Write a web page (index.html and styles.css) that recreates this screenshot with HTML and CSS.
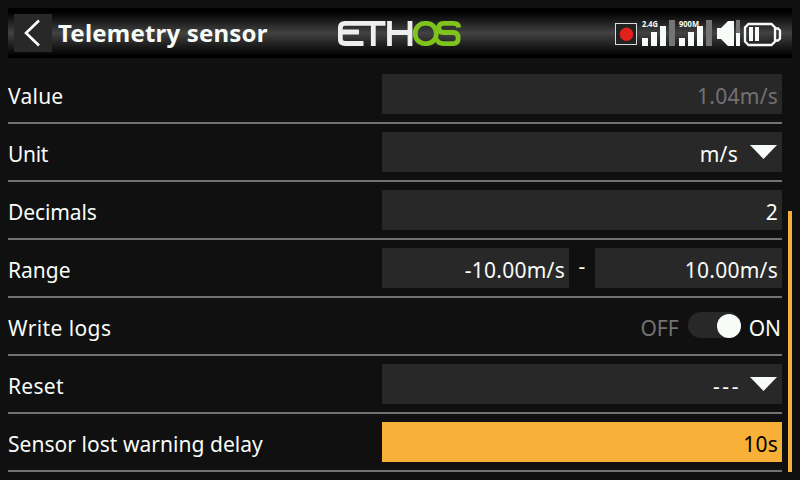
FILE: index.html
```
<!DOCTYPE html>
<html lang="en">
<head>
<meta charset="utf-8">
<title>Telemetry sensor</title>
<link rel="stylesheet" href="styles.css">
</head>
<body>
<header class="topbar">
  <button class="back" aria-label="Back"><svg width="38" height="38" viewBox="0 0 38 38"><path d="M25 6.500L12 19L25 31.500" fill="none" stroke="#fff" stroke-width="2.600"/></svg></button>
  <h1 class="title">Telemetry sensor</h1>
  <svg class="logo" width="124" height="27" viewBox="0 0 124 27" fill="none" stroke-width="4.800" aria-label="ETHOS">
    <g stroke="#eee"><path d="M47.500 3.300H7Q2.300 3.300 2.300 8V19Q2.300 23.500 7 23.500H25.500M3 12H21M35.300 3.300V26M51.500 1V26M72 1V26M51 12.500H72"/></g>
    <g stroke="#7fc41c"><rect x="77.300" y="3.400" width="21" height="20.200" rx="9.500"/><path d="M120.800 7.500Q120.500 3.400 115.500 3.400H105.500Q100.800 3.400 100.800 8Q100.800 12.500 105.500 12.500H115Q120.200 12.500 120.200 18.300Q120.200 23.600 115 23.600H105.500Q100 23.600 98.500 19"/></g>
  </svg>
  <svg class="status" width="170" height="28" viewBox="614 20 170 28">
    <rect x="615.500" y="23.500" width="21" height="21" fill="#222" stroke="#d8dcd8"/>
    <circle cx="626.500" cy="34.300" r="6.700" fill="#e2211c"/>
    <g fill="#f8fcf8">
      <path d="M642 38h6v8h-6zM651 32h6v14h-6zM660 26h6v20h-6zM679 38h6v8h-6zM688 32h6v14h-6zM697 26h6v20h-6z"/>
      <path d="M717 28h4l7-7h6v25h-6l-7-7h-4zM736 33h4v13h-4z"/>
      <path d="M749 27h4v14h-4zM755 27h4v14h-4z"/>
      <text class="tiny" x="642" y="26.500" textLength="16" lengthAdjust="spacingAndGlyphs">2.4G</text>
      <text class="tiny" x="679" y="26.500" textLength="20" lengthAdjust="spacingAndGlyphs">900M</text>
    </g>
    <path d="M669 20h6v26h-6zM706 20h6v26h-6zM736 20h4v13h-4z" fill="#737573"/>
    <path d="M748.500 24H771.500L775 27.500V41.500L771.500 45H748.500L745 41.500V27.500ZM776 28.500H778L780 30.500V38.500L778 40.500H776" fill="none" stroke="#f8fcf8" stroke-width="2.300"/>
  </svg>
</header>
<main class="body">
  <div class="form">
    <div class="row"><label class="l-value">Value</label><div class="field dim">1.04m/s</div></div>
    <div class="row"><label class="l-unit">Unit</label><div class="field select">m/s<i class="arrow"></i></div></div>
    <div class="row"><label class="l-dec">Decimals</label><div class="field">2</div></div>
    <div class="row"><label class="l-range">Range</label><div class="pair"><div class="field">-10.00m/s</div><span class="dash">-</span><div class="field">10.00m/s</div></div></div>
    <div class="row"><label class="l-logs">Write logs</label><div class="switch"><span class="off">OFF</span><span class="track"><i class="knob"></i></span><span class="on">ON</span></div></div>
    <div class="row"><label class="l-reset">Reset</label><div class="field select none">---<i class="arrow"></i></div></div>
    <div class="row"><label class="l-delay">Sensor lost warning delay</label><div class="field focus">10s</div></div>
  </div>
  <div class="scroll"></div>
</main>
</body>
</html>
```
FILE: styles.css
```
* { box-sizing: border-box; }
body {
  margin: 0; width: 800px; height: 480px; overflow: hidden;
  padding: 8px; background: #101010; color: #f8fcf8;
  font-family: "Noto Sans", "Open Sans", sans-serif;
}
.topbar {
  display: flex; height: 50px; padding: 6px;
  background: linear-gradient(#000 0, #000 8%, #424242 50%, #000 95%, #000 100%);
}
.back { width: 38px; height: 38px; padding: 0; border: 0; background: #292829; }
.back svg { display: block; }
.title { width: 279px; margin: 0 0 0 6px; font-size: 24px; line-height: 38px; font-weight: 700; letter-spacing: .2px; white-space: nowrap; }
.logo { margin: 6px 0 0 1px; }
.status { margin: 6px 0 0 152px; flex: none; overflow: visible; }
.tiny { font: 700 8px "Noto Sans", sans-serif; }
.body { display: flex; padding-top: 8px; }
.form { width: 774px; }
.row {
  display: flex; justify-content: space-between; height: 58px;
  padding: 8px 0; border-bottom: 2px solid #737173;
  font-size: 21px; line-height: 45px; white-space: nowrap;
}
.l-value { letter-spacing: .25px; }
.l-unit { letter-spacing: -.3px; }
.l-dec { letter-spacing: -.1px; }
.l-range { letter-spacing: 0; }
.l-logs { letter-spacing: .4px; }
.l-reset { letter-spacing: .3px; }
.l-delay { letter-spacing: .04px; }
.field { width: 400px; height: 40px; padding-right: 4px; text-align: right; letter-spacing: .25px; background: #292829; }
.dim { color: #737173; }
.select { display: flex; justify-content: flex-end; padding-right: 5px; }
.none { letter-spacing: 2.6px; }
.none .arrow { margin-left: 9px; }
.arrow { width: 27px; height: 14px; margin: 13px 0 0 12px; background: #f8fcf8; clip-path: polygon(0 0, 100% 0, 50% 100%); }
.pair { display: flex; }
.pair .field { width: 187px; }
.dash { width: 26px; text-align: center; line-height: 37px; }
.switch { display: flex; padding-right: 1px; }
.off { color: #737173; }
.track { width: 53px; height: 26px; margin: 6px 8px 0 9px; padding: 2px 0 0 29px; border-radius: 13px; background: #292829; }
.knob { display: block; width: 24px; height: 24px; border-radius: 50%; background: #f8fcf8; }
.focus { background: #f8b039; color: #000; }
.scroll { width: 4px; height: 261px; margin: 145px 0 0 6px; background: #f8b039; }
```
